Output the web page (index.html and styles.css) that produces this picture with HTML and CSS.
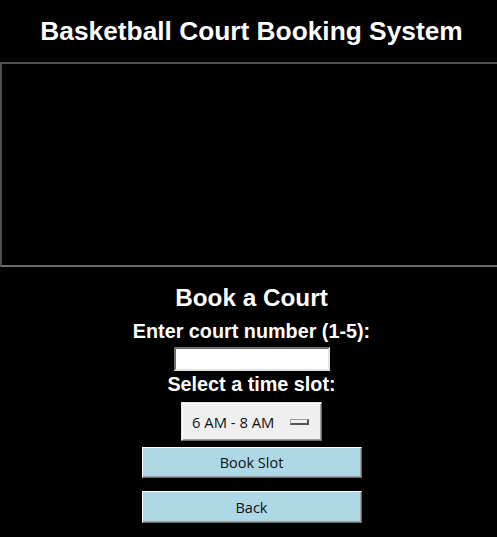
FILE: index.html
```html
<!DOCTYPE html>
<html>
<head>
<meta charset="utf-8">
<link rel="stylesheet" href="styles.css">
</head>
<body>
<div class="window">
  <h1 class="title">Basketball Court Booking System</h1>
  <div class="court-frame"></div>
  <div class="form">
    <h2 class="form-title">Book a Court</h2>
    <label class="label label-court" for="court">Enter court number (1-5):</label>
    <input class="entry" id="court" type="text">
    <div class="label label-slot">Select a time slot:</div>
    <div class="option-menu">
      <span class="option-text">6 AM - 8 AM</span>
      <span class="option-indicator"></span>
    </div>
    <button class="btn btn-book">Book Slot</button>
    <button class="btn btn-back">Back</button>
  </div>
</div>
</body>
</html>
```
FILE: styles.css
```css
html, body {
  margin: 0;
  padding: 0;
  background: #000;
  overflow: hidden;
}
.window {
  width: 503px;
  height: 537px;
  display: flex;
  flex-direction: column;
  font-family: "Liberation Sans", Arial, sans-serif;
  color: #fff;
}
.title {
  margin: 0;
  height: 62px;
  line-height: 62px;
  font-size: 26.3px;
  font-weight: bold;
  text-align: center;
}
.court-frame {
  box-sizing: border-box;
  height: 205px;
  border: 2px solid;
  border-color: #505050 #6b6b6b #6b6b6b #505050;
  background: #000;
}
.form {
  display: flex;
  flex-direction: column;
  align-items: center;
}
.form-title {
  margin: 17px 0 0;
  font-size: 24.3px;
  line-height: 28px;
  font-weight: bold;
}
.label {
  font-size: 19.8px;
  line-height: 22px;
  font-weight: bold;
}
.label-court {
  margin-top: 8px;
}
.entry {
  box-sizing: border-box;
  margin: 5px 0 0;
  width: 156px;
  height: 24px;
  background: #fff;
  border: 2px solid;
  border-color: #6d6d6d #e3e3e3 #e3e3e3 #6d6d6d;
  padding: 0 3px;
  outline: none;
}
.label-slot {
  margin-top: 2px;
}
.option-menu {
  box-sizing: border-box;
  margin-top: 7px;
  width: 141px;
  height: 39px;
  background: #f0f0f0;
  border: 1px solid;
  border-color: #e3e3e3 #696969 #696969 #e3e3e3;
  box-shadow: inset 1px 1px #fff, inset -1px -1px #a0a0a0;
  display: flex;
  align-items: center;
  padding: 0 12px 0 10px;
  justify-content: space-between;
  font-family: "Open Sans", "Noto Sans", sans-serif;
  font-size: 14.8px;
  color: #111;
}
.option-indicator {
  box-sizing: border-box;
  width: 19px;
  height: 6px;
  border: 1px solid;
  border-color: #a0a0a0 #555 #555 #a0a0a0;
  border-width: 1px 2px 2px 1px;
  background: #f0f0f0;
}
.btn {
  box-sizing: border-box;
  width: 220px;
  height: 31px;
  background: #add8e6;
  border: 1px solid;
  border-color: #fff #696969 #696969 #fff;
  box-shadow: inset -1px -1px #a0a0a0;
  font-family: "Open Sans", "Noto Sans", sans-serif;
  font-size: 14.5px;
  color: #111;
  padding: 0;
}
.btn-book {
  margin-top: 6px;
}
.btn-back {
  margin-top: 13px;
  height: 32px;
}
```
